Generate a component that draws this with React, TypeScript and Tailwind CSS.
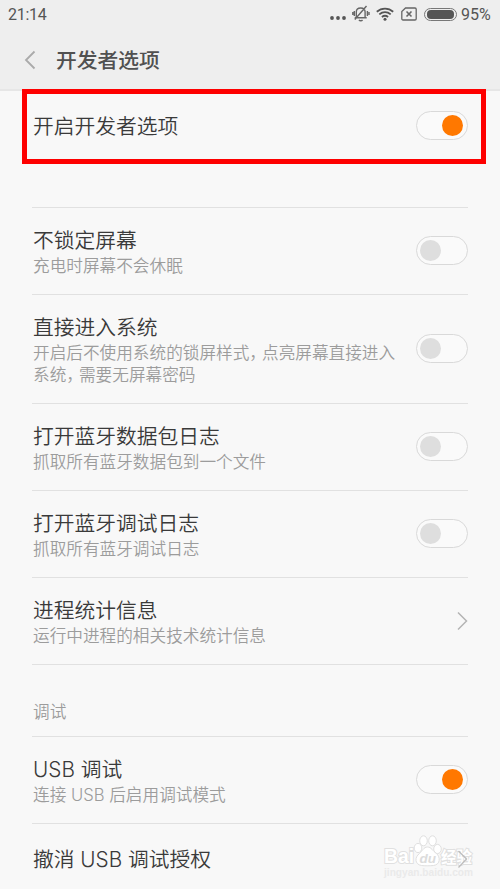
import React, { useState } from 'react';

interface Option {
  id: string;
  title: string;
  desc?: string[][];
  type: 'switch' | 'link';
  on?: boolean;
}

// Each desc line is split at its comma, which is set narrower than a full em
const options: Option[] = [
  { id: 'lock', title: '不锁定屏幕', desc: [['充电时屏幕不会休眠']], type: 'switch' },
  {
    id: 'direct',
    title: '直接进入系统',
    desc: [['开启后不使用系统的锁屏样式', '点亮屏幕直接进入'], ['系统', '需要无屏幕密码']],
    type: 'switch',
  },
  { id: 'hci', title: '打开蓝牙数据包日志', desc: [['抓取所有蓝牙数据包到一个文件']], type: 'switch' },
  { id: 'btlog', title: '打开蓝牙调试日志', desc: [['抓取所有蓝牙调试日志']], type: 'switch' },
  { id: 'stats', title: '进程统计信息', desc: [['运行中进程的相关技术统计信息']], type: 'link' },
];

const debugOptions: Option[] = [
  { id: 'usb', title: 'USB 调试', desc: [['连接 USB 后启用调试模式']], type: 'switch', on: true },
];

const Switch: React.FC<{ initial?: boolean }> = ({ initial = false }) => {
  const [on, setOn] = useState(initial);
  return (
    <button
      role="switch"
      aria-checked={on}
      onClick={() => setOn(!on)}
      className={`flex h-[29px] w-[52px] shrink-0 items-center rounded-full border border-[#d9d9d9] bg-[#fafafa] ${on ? 'justify-end pr-[4px]' : 'pl-[3px]'}`}
    >
      <span className={`h-[21px] w-[21px] rounded-full ${on ? 'bg-[#ff7800]' : 'bg-[#dedede]'}`} />
    </button>
  );
};

const Chevron = () => (
  <svg width="12" height="20" viewBox="0 0 12 20" fill="none" stroke="#b4b4b4" strokeWidth="1.5" className="shrink-0">
    <path d="M2 1.5 10.5 10 2 18.5" />
  </svg>
);

const Row: React.FC<{ option: Option }> = ({ option }) => (
  <div className="flex items-center justify-between border-b border-[#e1e1e1] pt-[18px] pb-[19px]">
    <div className="pt-px pl-px">
      <h2 className="h-[28px] text-[20.75px] leading-[27px] text-[#3a3a3a]">{option.title}</h2>
      {option.desc?.map((line, i) => (
        <p key={i} className="h-[22px] text-[16.65px] leading-[22px] whitespace-nowrap text-[#9c9c9c] last:-mb-[2px]">
          {line[0]}
          {line[1] && <span className="tracking-[-4px]">，</span>}
          {line[1]}
        </p>
      ))}
    </div>
    {option.type === 'switch' ? <Switch initial={option.on} /> : <Chevron />}
  </div>
);

const StatusBar = () => (
  <div className="flex h-7 items-center justify-between pr-2 pl-2 font-['Roboto',sans-serif] text-[16px] text-[#555]">
    <span className="pt-px tracking-[-0.3px]">21:14</span>
    <div className="flex items-center">
      <svg width="16" height="16" viewBox="0 0 16 16" fill="#555">
        <circle cx="2" cy="12" r="1.9" />
        <circle cx="8" cy="12" r="1.9" />
        <circle cx="14" cy="12" r="1.9" />
      </svg>
      <svg width="18" height="18" viewBox="0 0 18 18" fill="none" stroke="#666" strokeWidth="1.4" className="ml-[6px]">
        <path d="M4.3 12.5V7C4.3 4.5 6 3 8.7 3s4.400 1.5 4.400 4v5.500M2.700 12.800h12M7 14.800c.7 1.200 2.800 1.200 3.500 0M2.300 6v5M.8 7v3M15.400 6v5M17 7v3M14.500 1 2.800 14.500" />
      </svg>
      <svg width="18" height="16" viewBox="0 0 18 16" fill="none" stroke="#555" strokeWidth="1.8" className="ml-[6px]">
        <path d="M.8 5.7c4.8-4.2 11.6-4.2 16.4 0M3.3 8.4c3.4-2.9 8-2.9 11.4 0M5.9 11c1.9-1.5 4.3-1.5 6.2 0" />
        <circle cx="9" cy="13.3" r="1.5" fill="#555" stroke="none" />
      </svg>
      <svg width="16" height="14" viewBox="0 0 16 14" fill="none" stroke="#666" strokeWidth="1.3" className="ml-[7px]">
        <path d="M4.5 1H14c.7 0 1.2.5 1.2 1.2v9.6c0 .7-.5 1.2-1.2 1.2H2c-.7 0-1.2-.5-1.2-1.2V4.5z" />
        <path d="m5.5 4.5 5 5m0-5-5 5" strokeWidth="1.6" />
      </svg>
      <div className="ml-[7px] flex h-[13px] w-[33px] items-center justify-center rounded-full border border-[#777]">
        <div className="h-[9px] w-[27px] rounded-[4px] bg-[#555]" />
      </div>
      <span className="ml-1 w-[31px] pt-px">95%</span>
    </div>
  </div>
);

const Watermark = () => (
  <svg width="96" height="56" viewBox="0 0 96 56" className="pointer-events-none absolute top-[831px] left-[380px]" fill="#fff" stroke="#e0e0e0" strokeWidth="1" fontFamily="Liberation Sans, Noto Sans CJK SC, sans-serif">
    <text x="4" y="32" fontSize="21" fontWeight="700" textLength="30" lengthAdjust="spacingAndGlyphs" paintOrder="stroke" strokeWidth="2">Bai</text>
    <ellipse cx="38" cy="17" rx="3.8" ry="4.6" />
    <ellipse cx="43.5" cy="9.800" rx="3.8" ry="5" />
    <ellipse cx="52.500" cy="9.800" rx="3.8" ry="5" />
    <ellipse cx="57.500" cy="18" rx="3.8" ry="4.600" />
    <path d="M47.5 16c-4 0-5 4-8 6.5-5 3.5-5 11 2 12 3 .4 8 .4 12 0 7-.8 7-8.5 3-12-4-2.5-5-6.5-9-6.5z" />
    <text x="39.5" y="31.5" fontSize="13.5" fontWeight="700" fontStyle="italic" fill="#dcdcdc" stroke="none">du</text>
    <text x="61" y="32" fontSize="15.5" fontWeight="700" textLength="31" paintOrder="stroke" strokeWidth="2">经验</text>
    <text x="4" y="45" fontSize="10" fontWeight="700" textLength="89" lengthAdjust="spacingAndGlyphs" fill="#eaeaea" stroke="none">jingyan.baidu.com</text>
    {/* Row arrow stays visible through the mark */}
    <path d="m78.5 20 8 8-8 8.500" fill="none" stroke="#bdbdbd" strokeWidth="1.3" />
  </svg>
);

export default function App() {
  return (
    <div className="relative h-[889px] w-[500px] overflow-hidden bg-[#f8f8f8] font-['Inter','Noto_Sans_CJK_SC',sans-serif] font-[350]">
      <header className="h-[91px] border-b-2 border-[#e6e6e6] bg-[#eee] font-normal">
        <StatusBar />
        <div className="flex h-16 items-center pl-[24px]">
          <svg width="12" height="20" viewBox="0 0 12 20" fill="none" stroke="#aaa" strokeWidth="1.8">
            <path d="M10.5 1.5 2 10l8.5 8.5" />
          </svg>
          <h1 className="ml-[20px] pt-px text-[20.75px] leading-[27px] font-medium text-[#505050]">开发者选项</h1>
        </div>
      </header>

      <main className="px-8">
        <div className="flex h-[69px] items-center justify-between">
          <h2 className="pt-[2px] pl-px text-[20.75px] leading-[27px] text-[#3a3a3a]">开启开发者选项</h2>
          <Switch initial />
        </div>
        <section className="mt-[47px] border-t border-[#e1e1e1]">
          {options.map((option) => (
            <Row key={option.id} option={option} />
          ))}
        </section>
        <div className="h-[72px] border-b border-[#e1e1e1] pt-[35px] pl-px text-[16.65px] leading-6 text-[#9c9c9c]">调试</div>
        {debugOptions.map((option) => (
          <Row key={option.id} option={option} />
        ))}
        <div className="flex h-[70px] items-center justify-between">
          <h2 className="pl-px text-[20.75px] leading-[27px] text-[#3a3a3a]">撤消 USB 调试授权</h2>
        </div>
      </main>

      {/* Highlight around the master switch */}
      <div className="pointer-events-none absolute top-[89px] left-[22px] h-[75px] w-[464px] border-[5px] border-[#fe0000]" />
      <Watermark />
    </div>
  );
}
